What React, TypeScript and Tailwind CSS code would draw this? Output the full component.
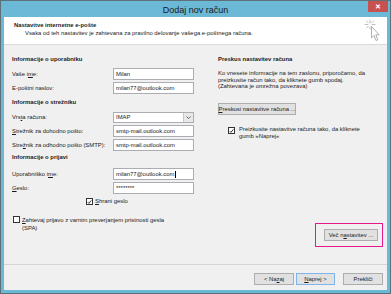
import React from "react";

const U = ({ children }: { children: React.ReactNode }) => (
  <span className="underline decoration-[0.5px] underline-offset-[1px]">{children}</span>
);

const Heading = ({ children }: { children: React.ReactNode }) => (
  <div className="font-bold leading-[7px] h-[7px] whitespace-nowrap">{children}</div>
);

const Field = ({ value, cursor }: { value: string; cursor?: boolean }) => (
  <div className="w-[81px] h-[12px] bg-white border border-[#abadb3] flex items-center pl-[2px] leading-[7px] whitespace-nowrap">
    {value}
    {cursor && <span className="inline-block w-[0.5px] h-[7px] bg-black ml-[0.5px]" />}
  </div>
);

const Row = ({ label, children, className = "" }: { label: React.ReactNode; children: React.ReactNode; className?: string }) => (
  <div className={"flex items-center " + className}>
    <div className="w-[101px] leading-[7px] whitespace-nowrap">{label}</div>
    {children}
  </div>
);

const Check = ({ checked }: { checked: boolean }) => (
  <div className="w-[7px] h-[7px] bg-white border border-[#333] shrink-0 flex items-center justify-center">
    {checked && (
      <svg width="6" height="6" viewBox="0 0 6 6">
        <path d="M0.8 3.1 L2.3 4.6 L5.2 1.1" stroke="#222" strokeWidth="1.1" fill="none" />
      </svg>
    )}
  </div>
);

const Btn = ({ children, className = "", def }: { children: React.ReactNode; className?: string; def?: boolean }) => (
  <div
    className={
      "h-[12px] flex items-center justify-center bg-[#e1e1e1] border leading-[7px] whitespace-nowrap " +
      (def ? "border-[#7eb4ea] " : "border-[#adadad] ") +
      className
    }
  >
    {children}
  </div>
);

const CursorIcon = () => (
  <svg width="17" height="23" viewBox="0 0 17 23">
    <g stroke="#b0b0b0" strokeWidth="0.8" strokeLinecap="round">
      <line x1="6" y1="1" x2="6" y2="4" />
      <line x1="6" y1="8" x2="6" y2="10" />
      <line x1="1" y1="5.5" x2="4" y2="5.5" />
      <line x1="8" y1="5.5" x2="11" y2="5.5" />
      <line x1="2.5" y1="2" x2="4.2" y2="3.8" />
      <line x1="9.5" y1="2" x2="7.8" y2="3.8" />
      <line x1="2.5" y1="9" x2="4.2" y2="7.2" />
    </g>
    <path
      d="M7.5 7.5 L7.5 19 L10 16.5 L12 21.5 L13.8 20.7 L11.8 15.8 L15.2 15.8 Z"
      fill="#ffffff"
      stroke="#9a9a9a"
      strokeWidth="0.8"
      strokeLinejoin="round"
    />
  </svg>
);

export default function App() {
  return (
    <div
      className="w-[391px] h-[294px] bg-[#6bb8d7] border border-[#5f6f78] flex flex-col text-[5.9px] text-[#1b1b1b] overflow-hidden"
      style={{ fontFamily: "'Liberation Sans', Arial, sans-serif" }}
    >
      {/* Title bar */}
      <div className="h-[16px] relative flex items-center justify-center shrink-0">
        <div className="text-[9px] leading-[10px] text-[#1a1a1a] mt-[1px]">Dodaj nov račun</div>
        <div className="absolute right-[2px] top-0 w-[20px] h-[11px] bg-[#c75050] flex items-center justify-center text-white text-[7px] font-bold leading-none">
          ✕
        </div>
      </div>

      {/* Client area */}
      <div className="flex-1 mx-[3px] mb-[3px] bg-[#f0f0f0] flex flex-col">
        {/* Header */}
        <div className="h-[28px] bg-white border-b border-[#dadada] relative shrink-0">
          <div className="pl-[10px] pt-[5px]">
            <div className="font-bold leading-[7px]">Nastavitve internetne e-pošte</div>
            <div className="pl-[11px] mt-[1px] leading-[7px]">
              Vsaka od teh nastavitev je zahtevana za pravilno delovanje vašega e-poštnega računa.
            </div>
          </div>
          <div className="absolute right-[6px] top-[2px]">
            <CursorIcon />
          </div>
        </div>

        {/* Body */}
        <div className="flex-1 flex">
          {/* Left column */}
          <div className="w-[192px] pl-[8px] pt-[11px]">
            <Heading>Informacije o uporabniku</Heading>
            <Row label={<>Vaše i<U>m</U>e:</>} className="mt-[5px]">
              <Field value="Milan" />
            </Row>
            <Row label="E-poštni naslov:" className="mt-[2px]">
              <Field value="milan77@outlook.com" />
            </Row>
            <div className="mt-[5px]">
              <Heading>Informacije o strežniku</Heading>
            </div>
            <Row label={<>Vrs<U>t</U>a računa:</>} className="mt-[6px]">
              <div className="w-[81px] h-[11px] bg-white border border-[#abadb3] flex items-center">
                <div className="flex-1 pl-[2px] leading-[7px]">IMAP</div>
                <div className="w-[10px] h-full bg-[#e8e8e8] border-l border-[#c7c7c7] flex items-center justify-center">
                  <svg width="5" height="3" viewBox="0 0 5 3">
                    <path d="M0.5 0.5 L2.5 2.5 L4.5 0.5" stroke="#444" strokeWidth="0.8" fill="none" />
                  </svg>
                </div>
              </div>
            </Row>
            <Row label={<><U>S</U>trežnik za dohodno pošto:</>} className="mt-[2px]">
              <Field value="smtp-mail.outlook.com" />
            </Row>
            <Row label={<>Stre<U>ž</U>nik za odhodno pošto (SMTP):</>} className="mt-[2px]">
              <Field value="smtp-mail.outlook.com" />
            </Row>
            <div className="mt-[3px]">
              <Heading>Informacije o prijavi</Heading>
            </div>
            <Row label={<>Uporabniško i<U>m</U>e:</>} className="mt-[7px]">
              <Field value="milan77@outlook.com" cursor />
            </Row>
            <Row label={<><U>G</U>eslo:</>} className="mt-[2px]">
              <Field value="********" />
            </Row>
            <div className="flex items-center mt-[4px] ml-[74px] gap-[2px]">
              <Check checked />
              <div className="leading-[7px]">
                <U>S</U>hrani geslo
              </div>
            </div>
            <div className="flex items-start mt-[11px] ml-[1px] gap-[2px]">
              <Check checked={false} />
              <div className="leading-[8px] mt-[-0.5px]">
                <U>Z</U>ahtevaj prijavo z varnim preverjanjem pristnosti gesla
                <br />
                (SPA)
              </div>
            </div>
          </div>

          {/* Right column */}
          <div className="flex-1 flex flex-col pl-[22px] pt-[11px]">
            <Heading>Preskus nastavitev računa</Heading>
            <div className="mt-[7px] leading-[6.5px] whitespace-nowrap">
              Ko vnesete informacije na tem zaslonu, priporočamo, da
              <br />
              preizkusite račun tako, da kliknete gumb spodaj.
              <br />
              (Zahtevana je omrežna povezava)
            </div>
            <Btn className="w-[78px] h-[11px] mt-[13.5px]">
              <span>
                <U>P</U>reskusi nastavitve računa ...
              </span>
            </Btn>
            <div className="flex items-start mt-[11px] ml-[10px] gap-[4px]">
              <div className="mt-[1px]">
                <Check checked />
              </div>
              <div className="leading-[7px]">
                Preizkusite nastavitve računa tako, da kliknete
                <br />
                gumb »Naprej«
              </div>
            </div>
            <div className="mt-auto self-end mr-[4px] mb-[17px] w-[68px] h-[24px] border-[1.5px] border-[#e6198a] flex items-center pl-[8px]">
              <Btn className="w-[54px]">
                <span>
                  Več n<U>a</U>stavitev ...
                </span>
              </Btn>
            </div>
          </div>
        </div>

        {/* Footer */}
        <div className="border-t border-[#d5d5d5] h-[26px] flex justify-end items-start pt-[8px] pr-[4px] shrink-0">
          <Btn className="w-[40px]">
            &lt; Na<U>z</U>aj
          </Btn>
          <Btn className="w-[39px] ml-[2px]" def>
            <span>
              <U>N</U>aprej &gt;
            </span>
          </Btn>
          <Btn className="w-[40px] ml-[8px]">Prekliči</Btn>
        </div>
      </div>
    </div>
  );
}
